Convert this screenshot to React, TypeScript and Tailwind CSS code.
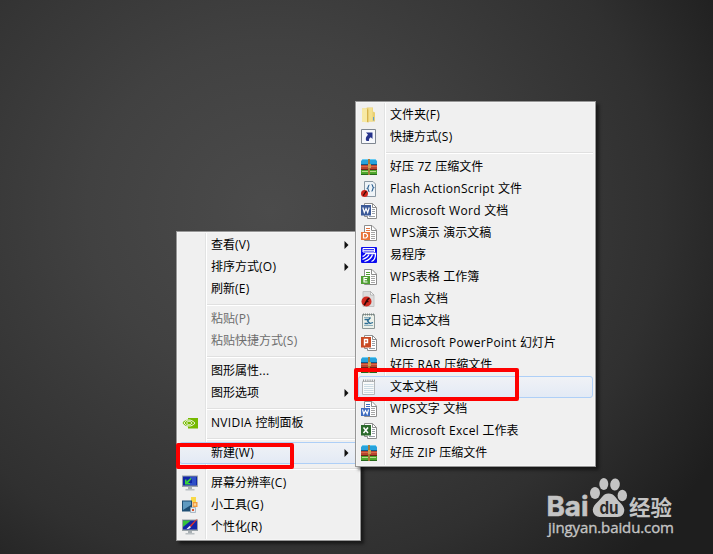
import React from 'react';

type IconName =
  | 'folder' | 'shortcut' | 'archive' | 'actionscript' | 'word' | 'wpsSlides' | 'yi'
  | 'wpsSheet' | 'flash' | 'journal' | 'powerpoint' | 'text' | 'wpsWriter' | 'excel'
  | 'nvidia' | 'display' | 'gadgets' | 'personalize';

type Item = {
  label: string;
  icon?: IconName;
  arrow?: boolean;
  disabled?: boolean;
  active?: boolean;
};

const desktopMenu: Item[][] = [
  [
    { label: '查看(V)', arrow: true },
    { label: '排序方式(O)', arrow: true },
    { label: '刷新(E)' },
  ],
  [
    { label: '粘贴(P)', disabled: true },
    { label: '粘贴快捷方式(S)', disabled: true },
  ],
  [
    { label: '图形属性...' },
    { label: '图形选项', arrow: true },
  ],
  [{ label: 'NVIDIA 控制面板', icon: 'nvidia' }],
  [{ label: '新建(W)', arrow: true, active: true }],
  [
    { label: '屏幕分辨率(C)', icon: 'display' },
    { label: '小工具(G)', icon: 'gadgets' },
    { label: '个性化(R)', icon: 'personalize' },
  ],
];

const newMenu: Item[][] = [
  [
    { label: '文件夹(F)', icon: 'folder' },
    { label: '快捷方式(S)', icon: 'shortcut' },
  ],
  [
    { label: '好压 7Z 压缩文件', icon: 'archive' },
    { label: 'Flash ActionScript 文件', icon: 'actionscript' },
    { label: 'Microsoft Word 文档', icon: 'word' },
    { label: 'WPS演示 演示文稿', icon: 'wpsSlides' },
    { label: '易程序', icon: 'yi' },
    { label: 'WPS表格 工作簿', icon: 'wpsSheet' },
    { label: 'Flash 文档', icon: 'flash' },
    { label: '日记本文档', icon: 'journal' },
    { label: 'Microsoft PowerPoint 幻灯片', icon: 'powerpoint' },
    { label: '好压 RAR 压缩文件', icon: 'archive' },
    { label: '文本文档', icon: 'text', active: true },
    { label: 'WPS文字 文档', icon: 'wpsWriter' },
    { label: 'Microsoft Excel 工作表', icon: 'excel' },
    { label: '好压 ZIP 压缩文件', icon: 'archive' },
  ],
];

// Office 2013 style: page with a coloured tile on the left
function OfficeIcon({ color, children }: { color: string; children: React.ReactNode }) {
  return (
    <>
      <path d="M3.5 .5H11.5L15.5 4.5V15.5H6.5V13.5H3.5z" fill="#fff" stroke="#8d8d8d" />
      <path d="M11.5 .5V4.5H15.5" fill="none" stroke="#8d8d8d" />
      <path d="M11 6.5h3M11 8.5h3M11 10.5h3M8 13.5h6" stroke="#9aa0a8" />
      <rect y="2" width="10" height="10.500" fill={color} />
      {children}
    </>
  );
}

// WPS style: one page with a small tile at the lower left
function WpsIcon({ color, children }: { color: string; children: React.ReactNode }) {
  return (
    <>
      <path d="M3.5 .5H11L15.5 5V15.5H3.5z" fill="#fff" stroke="#8d8d8d" />
      <path d="M10.5 .5V5.5H15.5" fill="none" stroke="#8d8d8d" />
      <path d="M5 3.5h4M5 5.5h4" stroke={color} />
      <path d="M10 7.5h4M10 9.5h4M10 11.5h4M10 13.5h4" stroke="#a5a5a5" />
      <rect y="7" width="9" height="8" fill={color} />
      {children}
    </>
  );
}

function Monitor({ children }: { children: React.ReactNode }) {
  return (
    <>
      <path d="M0 .5h16v11.5H0z" fill="#9aa3a8" />
      <path d="M1 1.5h14v9H1z" fill="#1226a8" />
      <path d="M6 12h4v2H6z" fill="#a8afb3" />
      <path d="M3.5 14h9v1.5h-9z" fill="#b9bfc2" />
      {children}
    </>
  );
}

const icons: Record<IconName, React.ReactNode> = {
  folder: (
    <>
      <path d="M1 1.5h4l1-1h6v4l2 1v9H1z" fill="#e9cf72" />
      <path d="M1 1.5h5l.5 14-5.500-1z" fill="#f7e9a4" />
      <path d="M6 2l1.500 1v12.500L6 15z" fill="#d6b24c" />
      <path d="M7.500 1h4v13.500h-4z" fill="#f3e08e" />
      <path d="M12.500 10v3.500" stroke="#5f9ed0" />
    </>
  ),
  shortcut: (
    <>
      <path d="M.5 .5h14v14H.5z" fill="#f6f8fc" stroke="#7f8791" />
      <path d="M5 3.500h6.500V10L9.800 8.300C8.300 9 7.800 10.500 8 12H5.500C4 10 5 7.500 7 5.700z" fill="#27348c" />
    </>
  ),
  archive: (
    <>
      <path d="M2 0h12L16 2v4H0V2z" fill="#27a3dc" />
      <path d="M2 0h12l.8 1H1.200z" fill="#68cbf2" />
      <path d="M0 5h16v1H0z" fill="#0d5a8a" />
      <path d="M0 6h16v5H0z" fill="#b8452f" />
      <path d="M0 7h16v1H0z" fill="#d9664a" />
      <path d="M0 10h16v1H0z" fill="#6f2418" />
      <path d="M0 11h16v4H0z" fill="#4ea52c" />
      <path d="M1 12h14v1H1z" fill="#b9dc8c" />
      <path d="M0 15h16v1H0z" fill="#27691b" />
      <path d="M7 0h2v16H7z" fill="#a87a3a" />
      <path d="M7 5h3v4H7z" fill="#c9a052" />
    </>
  ),
  actionscript: (
    <>
      <path d="M3.500 .5H12L14.500 3v12.500H3.500z" fill="#eef3f7" stroke="#8b98a3" />
      <path d="M8.500 4c-1.600 0-.8 2.800-2 3.300 1.200.5.400 3.400 2 3.400M10.500 3.500c1.600 0 .8 2.800 2 3.300-1.200.5-.4 3.400-2 3.400" fill="none" stroke="#2f6292" strokeWidth="1.200" />
      <circle cx="3.500" cy="12.500" r="3.500" fill="#d0261d" />
      <path d="M2 14.500c1.500-.7 1.500-3.600 3.600-4.200" fill="none" stroke="#3a0907" strokeWidth="1.200" />
    </>
  ),
  word: (
    <OfficeIcon color="#3b5998">
      <path d="M1.800 4.500L3.300 9.500 5 5.500 6.700 9.500 8.200 4.500" fill="none" stroke="#fff" strokeWidth="1.200" />
    </OfficeIcon>
  ),
  wpsSlides: (
    <WpsIcon color="#e8743b">
      <path d="M2.500 8.500h2.500L6.500 10v1.500L5 13H2.500z" fill="none" stroke="#fff" strokeWidth="1.200" />
    </WpsIcon>
  ),
  yi: (
    <>
      <rect width="16" height="16" rx="1" fill="#0a0af0" />
      <path d="M2 1.500h11.500v3.500H2zM2 3.300h11.500" fill="none" stroke="#fff" />
      <path d="M1.500 9.500C3.500 9 4.500 7.500 5 6.500H14.500C14.500 10 13.500 13.500 10.500 14.500" fill="none" stroke="#fff" strokeWidth="1.300" />
      <path d="M8 7.500C7 10 4 11.500 1.500 12.500M11.500 7.500C10.500 11 7 13.500 3.500 14.500" fill="none" stroke="#fff" strokeWidth="1.300" />
    </>
  ),
  wpsSheet: (
    <WpsIcon color="#4f9e31">
      <path d="M6.500 8.500H3V13h3.500M3 10.700h3" fill="none" stroke="#fff" strokeWidth="1.200" />
    </WpsIcon>
  ),
  flash: (
    <>
      <path d="M2 .5h7.500l3.500 3.500v11.500H2z" fill="#dcdcdc" stroke="#c4c4c4" />
      <path d="M9.500 .5V4H13z" fill="#fafafa" stroke="#999" strokeWidth=".6" />
      <circle cx="5.500" cy="10.500" r="5" fill="#d02a20" />
      <path d="M2.800 14c2.500-.8 2-6 5.700-6.800M5 10.500h2.500" fill="none" stroke="#300906" strokeWidth="1.600" />
    </>
  ),
  journal: (
    <>
      <path d="M1.500 1.500h12v14h-12z" fill="#edf1ea" stroke="#8e9a98" />
      <path d="M2 1.500h11" stroke="#77827f" strokeDasharray="1 1" strokeWidth="2" />
      <path d="M3 4.500h6M3 12.500h9" stroke="#8eb0bd" />
      <path d="M3.500 6.500h4M9.500 4.500L6.500 8 9 10.500l3-1M3.500 10.500h4" fill="none" stroke="#2a6c93" strokeWidth="1.300" />
    </>
  ),
  powerpoint: (
    <OfficeIcon color="#ca4a22">
      <path d="M3.500 10.500V4.500h3v3h-3" fill="none" stroke="#fff" strokeWidth="1.400" />
    </OfficeIcon>
  ),
  text: (
    <>
      <path d="M1.500 2.500h12v13h-12z" fill="#fafafa" stroke="#b4b8bb" />
      <path d="M2 1.500h12" stroke="#999" strokeWidth="2" strokeDasharray="1 1.200" />
      <path d="M3 5.500h9.500M3 7.500h9.500M3 9.500h9.500M3 11.500h9.500M3 13.500h9.500" stroke="#cbdbe4" />
    </>
  ),
  wpsWriter: (
    <WpsIcon color="#3d6cc0">
      <path d="M1.500 8.500L2.800 13 4.500 9.500 6.200 13 7.500 8.500" fill="none" stroke="#fff" strokeWidth="1.100" />
    </WpsIcon>
  ),
  excel: (
    <OfficeIcon color="#2b6a2c">
      <path d="M2.500 4.500l4.500 5.500M7 4.500l-4.500 5.500" stroke="#fff" strokeWidth="1.500" />
    </OfficeIcon>
  ),
  nvidia: (
    <>
      <path d="M6 3h10v10.500H6z" fill="#76b900" />
      <path d="M.5 8C3 4 8.500 2.800 13 8.200 9.500 12.500 4 13 .5 8z" fill="#76b900" />
      <path d="M2 8c2-3.500 7-4.500 11 .2C9.500 12 5 12 2 8z" fill="none" stroke="#fff" strokeWidth=".9" />
      <path d="M4.500 8c1-2.200 4-2.400 5.500.1C8.200 10.300 6 10.300 4.500 8z" fill="#76b900" stroke="#fff" strokeWidth=".9" />
    </>
  ),
  display: (
    <Monitor>
      <path d="M8 3h6M10 5h4M10 7h4M8 9h6" stroke="#4b78e6" />
      <path d="M3 9.500V4.500h1.500V6.500L8.500 3 9.500 4 6 8h2v1.500z" fill="#3bd13b" />
    </Monitor>
  ),
  gadgets: (
    <>
      <path d="M9 0h5v5H9z" fill="#f8d948" />
      <path d="M0 3.500h10V14.500H0z" fill="#1f4f74" />
      <path d="M1 4.500h8V8L1 13z" fill="#5f9ac0" />
      <path d="M10.500 5h5v5h-5z" fill="#f09a3c" />
      <path d="M11.800 6.300h2.400v2.400h-2.400z" fill="#fbd9a0" />
      <path d="M8.500 10.500h5v5h-5z" fill="#e4eaf0" stroke="#8fa3b5" strokeWidth=".7" />
      <path d="M10 12h2v2h-2z" fill="#d8542b" />
    </>
  ),
  personalize: (
    <Monitor>
      <path d="M1 1.500h8L1 8z" fill="#35c43b" />
      <path d="M13.500 1L15.500 0 9 8 7.500 7z" fill="#e03226" />
      <path d="M7.500 7L9 8c-1 1.800-2.500 2-4.500 2z" fill="#f3f3f3" />
    </Monitor>
  ),
};

// Latin runs are tracked separately so the Chinese characters keep a 12px pitch
function Label({ text }: { text: string }) {
  return (
    <>
      {text.split(/([\x20-\x7e]+)/).filter(Boolean).map((run, i) => (
        <span key={i} className={/^[\x20-\x7e]/.test(run) ? 'tracking-[0.3px]' : ''}>{run}</span>
      ))}
    </>
  );
}

function MenuItem({ item }: { item: Item }) {
  return (
    <li
      className={`relative flex h-[22px] items-center whitespace-pre rounded-[3px] border ${
        item.active ? 'border-[#aecff7] bg-gradient-to-b from-[#f0f2f6] to-[#e3eaf5]' : 'border-transparent'
      } ${item.disabled ? 'text-[#6d6d6d]' : 'text-black'}`}
    >
      <span className="flex w-[31px] shrink-0 pl-[2px]">
        {item.icon && (
          <svg width="16" height="16" viewBox="0 0 16 16">{icons[item.icon]}</svg>
        )}
      </span>
      <span className="grow"><Label text={item.label} /></span>
      {item.arrow && (
        <svg className="mr-[8px]" width="5" height="8" viewBox="0 0 5 8">
          <path d="M.5 0L4.500 4 .5 8z" fill="#111" />
        </svg>
      )}
    </li>
  );
}

function Menu({ groups, className }: { groups: Item[][]; className: string }) {
  return (
    <div className={`absolute border border-[#979797] bg-[#f0f0f0] shadow-[3px_3px_3px_rgba(0,0,0,0.5)] ${className}`}>
      <div className="relative border border-[#f5f5f5] px-px py-px">
        <div className="absolute inset-y-0 left-[27px] w-[2px] border-l border-r border-l-[#e2e3e3] border-r-white" />
        {groups.map((group, i) => (
          <React.Fragment key={i}>
            {i > 0 && (
              <div className="h-[8px] pl-[28px] pt-[4px]">
                <div className="h-[2px] border-b border-t border-b-white border-t-[#e0e0e0]" />
              </div>
            )}
            <ul>
              {group.map((item) => <MenuItem key={item.label} item={item} />)}
            </ul>
          </React.Fragment>
        ))}
      </div>
    </div>
  );
}

function Watermark() {
  return (
    <svg className="absolute left-[540px] top-[472px]" width="144" height="74" viewBox="0 0 144 74" fill="#c4c4c4">
      <text x="6.500" y="44" fontSize="27.500" fontWeight="700" fontFamily="Inter, sans-serif" stroke="#c4c4c4" strokeWidth=".6" textLength="42" lengthAdjust="spacingAndGlyphs">Bai</text>
      <ellipse cx="55" cy="21" rx="5" ry="6" />
      <ellipse cx="63.800" cy="12" rx="4.500" ry="6" />
      <ellipse cx="75" cy="12.500" rx="4.800" ry="6" transform="rotate(8 75 12.500)" />
      <ellipse cx="82.300" cy="23.500" rx="4.700" ry="5.800" />
      <path d="M68.500 21.500c6 0 7.500 5 11 8.500 4 4 6 7 4 11.500-2 4.500-8 3.500-15 3.500s-12 1-14.500-3c-3-5 0-9 4-12.500 3.500-3 5-8 10.500-8z" />
      <text x="59.500" y="42" fontSize="17" fontWeight="700" fontFamily="Inter, sans-serif" fill="#292929" textLength="19" lengthAdjust="spacingAndGlyphs">du</text>
      <text x="89" y="42.500" fontSize="21" fontWeight="700" fontFamily="'Noto Sans CJK SC', sans-serif" textLength="43" lengthAdjust="spacingAndGlyphs">经验</text>
      <text x="8" y="61" fontSize="15" fontFamily="'Open Sans', sans-serif" stroke="#c4c4c4" strokeWidth=".35" textLength="126" lengthAdjust="spacing">jingyan.baidu.com</text>
    </svg>
  );
}

export default function App() {
  return (
    <main className="relative h-[554px] w-[713px] overflow-hidden bg-[radial-gradient(ellipse_520px_480px_at_270px_210px,#4b4b4b_0%,#414141_35%,#303030_75%,#1e1e1e_100%)] font-['Open_Sans','Noto_Sans_CJK_SC',sans-serif] text-[12px] leading-[20px]">
      <Menu groups={desktopMenu} className="left-[176px] top-[231px] w-[185px]" />
      <Menu groups={newMenu} className="left-[355px] top-[101px] w-[241px]" />
      <div className="absolute left-[176px] top-[443px] h-[26px] w-[118px] rounded-[2px] border-4 border-[#fe0000]" />
      <div className="absolute left-[354px] top-[368px] h-[33px] w-[165px] rounded-[2px] border-4 border-[#fe0000]" />
      <Watermark />
    </main>
  );
}
